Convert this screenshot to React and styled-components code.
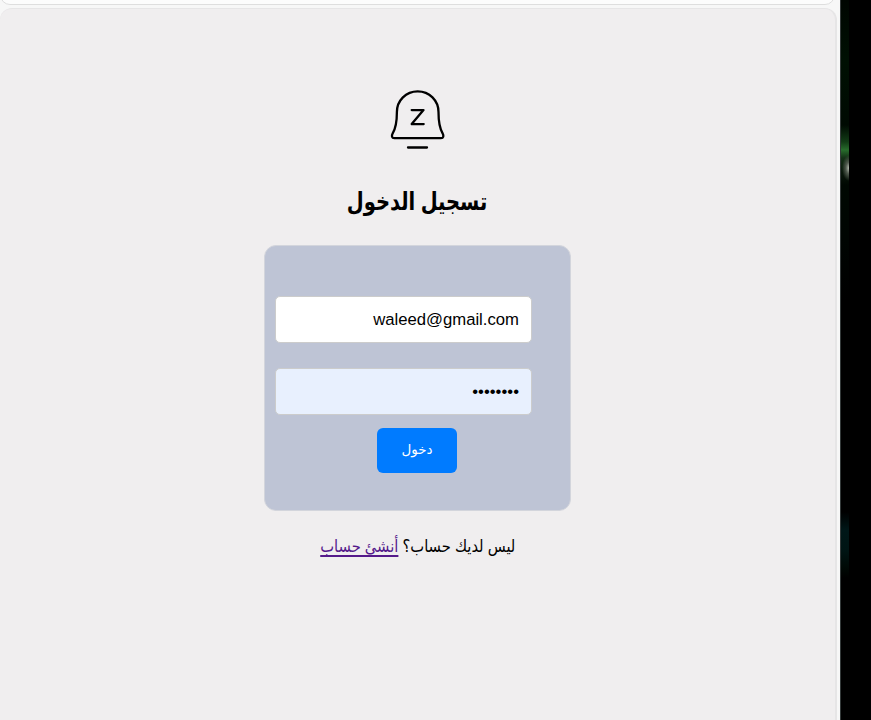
import React from "react";
import styled, { createGlobalStyle } from "styled-components";

const GlobalStyle = createGlobalStyle`
  * { box-sizing: border-box; }
  html, body { margin: 0; background: #000; overflow: hidden; }
  body { font-family: "Liberation Sans", "DejaVu Sans", sans-serif; color: #000; }
`;

const Screen = styled.div`
  display: grid;
  grid-template-columns: 840px 9px 1fr;
  width: 871px;
  height: 720px;
  overflow: hidden;
`;

const Browser = styled.div`
  display: flex;
  flex-direction: column;
  gap: 3px;
  padding-right: 3px;
  background: #f7f7f7;
`;

const ToolbarClip = styled.div`
  flex: none;
  display: flex;
  flex-direction: column;
  justify-content: flex-end;
  height: 5px;
  overflow: hidden;
`;

const Toolbar = styled.div`
  flex: none;
  width: 835px;
  height: 24px;
  background: #fcfcfc;
  border: 1px solid #dedede;
  border-radius: 10px;
`;

const Page = styled.main`
  flex: 1;
  display: flex;
  flex-direction: column;
  align-items: center;
  background: #f0eeef;
  border: solid #e6e5e6;
  border-width: 1px 2px 0 0;
  border-radius: 12px 12px 0 0;
  padding-top: 81px;
`;

const Title = styled.h1`
  margin: 23px 0 0;
  height: 56px;
  line-height: 56px;
  font-size: 25px;
  font-weight: 700;
  white-space: nowrap;
  transform: scaleX(${(p) => p.$stretch});
`;

const Card = styled.form`
  width: 307px;
  height: 266px;
  margin-top: 16px;
  padding: 50px 10px 0;
  display: flex;
  flex-direction: column;
  background: #bec4d5;
  border: 1px solid #d3d5dc;
  border-radius: 12px;
`;

const Field = styled.input`
  display: block;
  width: 257px;
  height: 47px;
  margin: 0 0 ${(p) => p.$gap}px;
  padding: 0 12px;
  font: 16.7px "Liberation Sans", sans-serif;
  text-align: right;
  color: #000;
  background: ${(p) => (p.$filled ? "#e8f0fe" : "#fff")};
  border: 1px solid #ccc;
  border-radius: 5px;
  outline: none;
`;

const Submit = styled.button`
  align-self: center;
  width: 80px;
  height: 45px;
  margin-right: 1px;
  padding: 0 0 3px;
  font: 13.5px "DejaVu Sans", sans-serif;
  color: #fff;
  background: #007bff;
  border: 0;
  border-radius: 6px;
`;

const Footer = styled.p`
  margin: 20px 0 0;
  height: 32px;
  line-height: 32px;
  font-size: 17px;
  white-space: nowrap;
  transform: scaleX(${(p) => p.$stretch});
`;

const Link = styled.a`
  color: #551a8b;
  text-decoration: underline;
  text-decoration-thickness: 2px;
  text-underline-offset: 3px;
  text-decoration-skip-ink: none;
`;

const Wallpaper = styled.div`
  border-left: 1px solid #343a3a;
  background:
    radial-gradient(ellipse 7px 13px at 8px 168px, #b4bcb0 0%, #4e584c 45%, transparent 100%),
    linear-gradient(#000601 0, #001003 60px, #000a02 125px, #123c16 142px, #286c2c 150px, #143016 158px, #0a180b 172px, #000802 185px, #000502 240px, #000 300px, #000 512px, #001718 530px, #001514 550px, #000905 568px, #000 578px);
`;

function BellIcon() {
  return (
    <svg width="55" height="60" viewBox="390 90 55 60" fill="none" stroke="#000" strokeWidth="2.3" strokeLinecap="round" strokeLinejoin="round">
      <path d="M417.7 91.3C406 91.3 396.9 100.5 396.9 112C396.9 121 396.5 127 392.7 133.3C391.3 136 391.8 138.1 394.3 138.1H441C443.5 138.1 444 136 442.6 133.3C438.9 127 438.5 121 438.5 112C438.5 100.5 429.4 91.3 417.7 91.3Z" />
      <path d="M411.7 110.1H423.5L411.7 124.1H423.7M408 147.5H427" />
    </svg>
  );
}

export default function App() {
  return (
    <>
      <GlobalStyle />
      <Screen>
        <Browser>
          <ToolbarClip>
            <Toolbar />
          </ToolbarClip>
          <Page>
            <BellIcon />
            <Title dir="rtl" $stretch={0.78}>تسجيل الدخول</Title>
            <Card>
              <Field type="text" defaultValue="waleed@gmail.com" $gap={25} />
              <Field type="password" defaultValue="password" $gap={13} $filled />
              <Submit type="button">دخول</Submit>
            </Card>
            <Footer dir="rtl" $stretch={0.865}>
              ليس لديك حساب؟ <Link href="#">أنشئ حساب</Link>
            </Footer>
          </Page>
        </Browser>
        <Wallpaper />
      </Screen>
    </>
  );
}
